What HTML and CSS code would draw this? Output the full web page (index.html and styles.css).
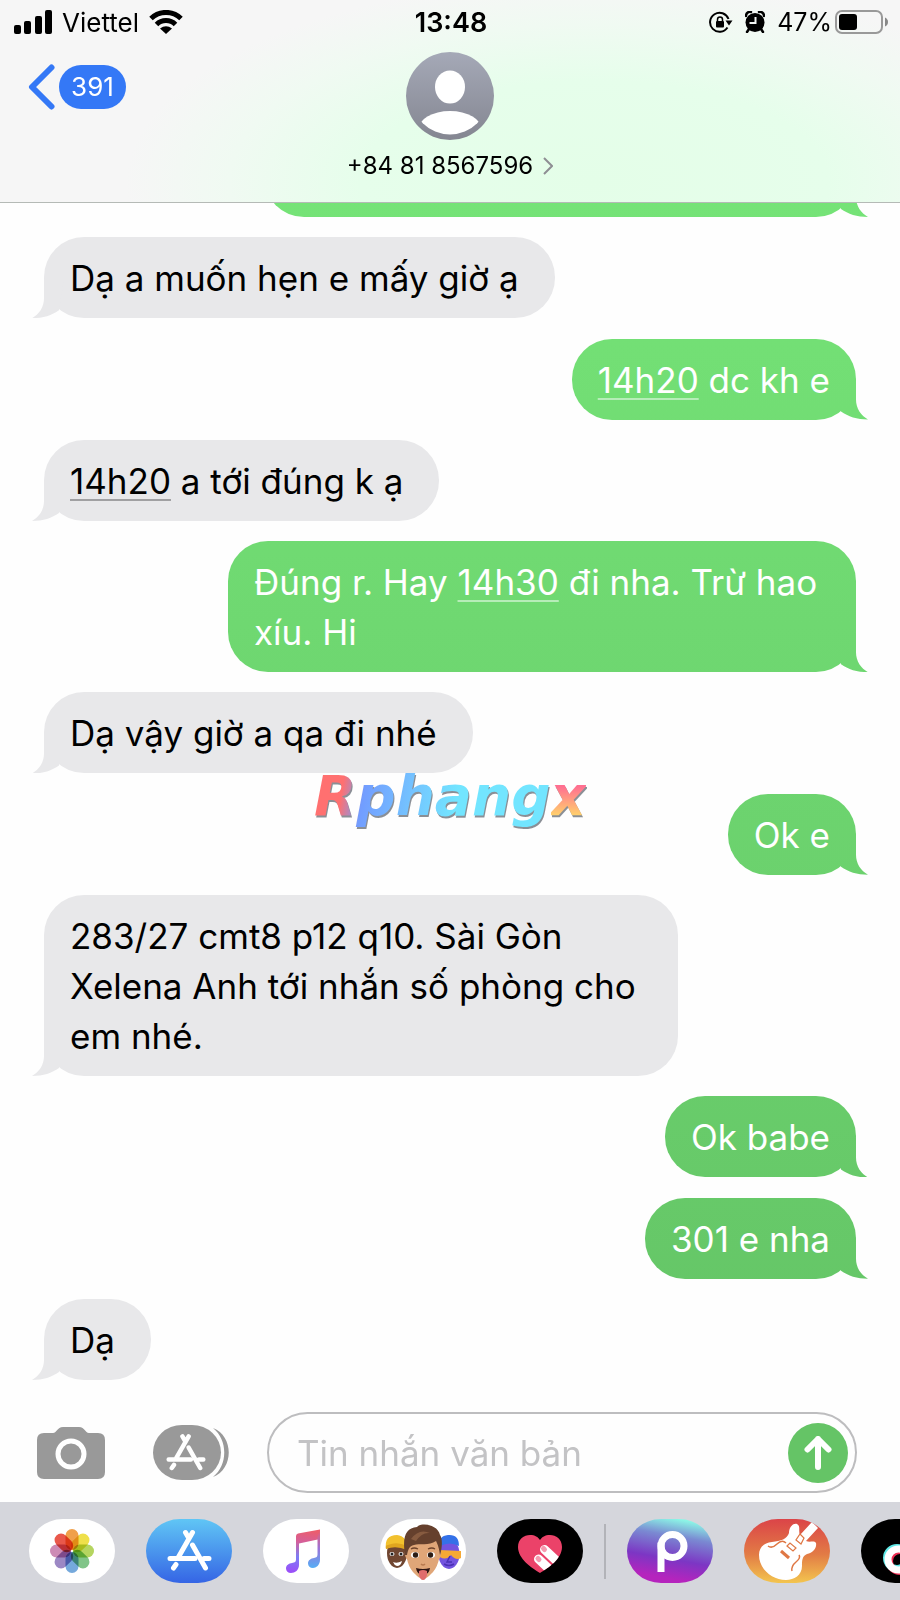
FILE: index.html
```html
<!DOCTYPE html>
<html lang="vi">
<head>
  <meta charset="UTF-8">
  <meta name="viewport" content="width=device-width, initial-scale=1">
  <title>+84 81 8567596</title>
  <link rel="stylesheet" href="styles.css">
</head>
<body>

<svg class="defs" aria-hidden="true">
  <symbol id="store" viewBox="21 10 45 42">
    <g fill="none" stroke="#fff" stroke-width="5" stroke-linecap="round">
      <path d="M46.500 13.500L32.500 38M39.500 13.500L43 19.500M24 39.500H49M58 39.500H63M30 45.500L27.500 49"/>
      <path d="M46.500 26L59.500 49"/>
    </g>
  </symbol>
</svg>

<header>
  <div class="status">
    <div class="status-left">
      <svg width="38" height="24" viewBox="0 0 38 24">
        <rect x="0" y="15" width="7" height="9" rx="2"/>
        <rect x="10" y="11" width="7" height="13" rx="2"/>
        <rect x="21" y="6" width="7" height="18" rx="2"/>
        <rect x="31" y="0" width="7" height="24" rx="2"/>
      </svg>
      <span>Viettel</span>
      <svg width="34" height="24" viewBox="0 0 34 24">
        <g fill="none" stroke="#000" stroke-width="5">
          <path d="M2 8.500A21.500 21.500 0 0 1 32 8.500"/>
          <path d="M7.500 14.500A13.500 13.500 0 0 1 26.500 14.500"/>
        </g>
        <path d="M11 18.500Q17 14 23 18.500L17 24Z"/>
      </svg>
    </div>
    <time>13:48</time>
    <div class="status-right">
      <svg width="24" height="22" viewBox="0 0 24 22">
        <path d="M18.500 16.500A9.500 9.500 0 1 1 19.500 8" fill="none" stroke="#000" stroke-width="2"/>
        <path d="M16.500 9.500H23.500L20 14.500Z"/>
        <rect x="7" y="10" width="8" height="6.500" rx="1"/>
        <path d="M8.500 10V8.500A2.500 2.500 0 0 1 13.500 8.500V10" fill="none" stroke="#000" stroke-width="1.500"/>
      </svg>
      <svg width="20" height="22" viewBox="0 0 20 22">
        <circle cx="10" cy="11.500" r="9.500"/>
        <path d="M1 5A4 4 0 0 1 6 1M14 1A4 4 0 0 1 19 5M4 18L2 21M16 18L18 21" fill="none" stroke="#000" stroke-width="2.500" stroke-linecap="round"/>
        <path d="M10.500 6V12H4.500" fill="none" stroke="#f3f6f4" stroke-width="2"/>
      </svg>
      <span class="percent">47%</span>
      <svg class="battery" width="53" height="24" viewBox="0 0 53 24">
        <rect x="1" y="1" width="46" height="22" rx="6" fill="none" stroke="#999" stroke-width="2"/>
        <rect x="4" y="4" width="18" height="16" rx="3"/>
        <path d="M50 7.500Q53 9 53 12T50 16.500Z" fill="#888"/>
      </svg>
    </div>
  </div>

  <nav>
    <a href="#" class="back" aria-label="Quay lại">
      <svg width="27" height="46" viewBox="0 0 27 46"><path d="M23.500 3.500L4 23L23.500 42.500" fill="none" stroke="#3478f6" stroke-width="6" stroke-linecap="round" stroke-linejoin="round"/></svg>
      <span class="badge">391</span>
    </a>
    <a href="#" class="contact">
      <svg width="88" height="88" viewBox="0 0 88 88">
        <defs>
          <linearGradient id="avatar" x2="0" y2="1"><stop stop-color="#a5a9b7"/><stop offset="1" stop-color="#848691"/></linearGradient>
          <clipPath id="face"><circle cx="44" cy="44" r="38.500"/></clipPath>
        </defs>
        <circle cx="44" cy="44" r="44" fill="url(#avatar)"/>
        <ellipse cx="44" cy="35" rx="15" ry="16.500" fill="#fff"/>
        <ellipse cx="44" cy="78" rx="32" ry="19" fill="#fff" clip-path="url(#face)"/>
      </svg>
      <span class="number">+84 81 8567596
        <svg width="10" height="18" viewBox="0 0 10 18"><path d="M1 1L9 9L1 17" fill="none" stroke="#8e8e93" stroke-width="2"/></svg>
      </span>
    </a>
  </nav>
</header>

<main>
  <div class="bubble me cut"></div>
  <div class="bubble">Dạ a muốn hẹn e mấy giờ ạ</div>
  <div class="bubble me"><a href="#">14h20</a> dc kh e</div>
  <div class="bubble"><a href="#">14h20</a> a tới đúng k ạ</div>
  <div class="bubble me">Đúng r. Hay <a href="#">14h30</a> đi nha. Trừ hao xíu. Hi</div>
  <div class="bubble">Dạ vậy giờ a qa đi nhé</div>
  <div class="bubble me">Ok e</div>
  <div class="bubble">283/27 cmt8 p12 q10. Sài Gòn Xelena Anh tới nhắn số phòng cho em nhé.</div>
  <div class="bubble me">Ok babe</div>
  <div class="bubble me">301 e nha</div>
  <div class="bubble">Dạ</div>
</main>

<div class="watermark"><span class="mark">Rphang</span><span class="mark-x">x</span></div>

<form class="composer">
  <button type="button" class="camera" aria-label="Máy ảnh">
    <svg width="68" height="52" viewBox="0 0 68 52">
      <path d="M7 6H16C20 6 20 0 26 0H42C48 0 48 6 52 6H61Q68 6 68 13V45Q68 52 61 52H7Q0 52 0 45V13Q0 6 7 6Z" fill="#999"/>
      <circle cx="34" cy="27" r="13" fill="none" stroke="#fff" stroke-width="5"/>
    </svg>
  </button>
  <button type="button" class="apps" aria-label="Ứng dụng">
    <svg width="77" height="55" viewBox="0 0 77 55">
      <rect width="68" height="55" rx="29" ry="27.500" fill="#999"/>
      <path d="M60 3C81 11 81 44 60 52C75 40 75 15 60 3Z" fill="#999"/>
      <use href="#store" x="13" y="8" width="40" height="38"/>
    </svg>
  </button>
  <div class="field">
    <input type="text" placeholder="Tin nhắn văn bản" aria-label="Tin nhắn văn bản">
    <button type="submit" class="send" aria-label="Gửi">
      <svg width="28" height="34" viewBox="0 0 28 34"><path d="M14 31V3M3.500 13.500L14 3L24.500 13.500" fill="none" stroke="#fff" stroke-width="6" stroke-linecap="round" stroke-linejoin="round"/></svg>
    </button>
  </div>
</form>

<footer>
  <button class="app" aria-label="Ảnh">
    <svg viewBox="0 0 86 64">
      <g class="petals" transform="translate(43 32)">
        <rect x="-6.500" y="-22" width="13" height="21" rx="6.500" fill="#f0a04b"/>
        <rect x="-6.500" y="-22" width="13" height="21" rx="6.500" fill="#efe04a" transform="rotate(45)"/>
        <rect x="-6.500" y="-22" width="13" height="21" rx="6.500" fill="#b5d560" transform="rotate(90)"/>
        <rect x="-6.500" y="-22" width="13" height="21" rx="6.500" fill="#80c488" transform="rotate(135)"/>
        <rect x="-6.500" y="-22" width="13" height="21" rx="6.500" fill="#75a9dc" transform="rotate(180)"/>
        <rect x="-6.500" y="-22" width="13" height="21" rx="6.500" fill="#9c88c4" transform="rotate(225)"/>
        <rect x="-6.500" y="-22" width="13" height="21" rx="6.500" fill="#cd8bb5" transform="rotate(270)"/>
        <rect x="-6.500" y="-22" width="13" height="21" rx="6.500" fill="#e9584b" transform="rotate(315)"/>
      </g>
    </svg>
  </button>
  <button class="app store" aria-label="App Store">
    <svg viewBox="0 0 86 64"><use href="#store" x="21" y="10" width="45" height="42"/></svg>
  </button>
  <button class="app" aria-label="Nhạc">
    <svg viewBox="0 0 86 64">
      <defs>
        <linearGradient id="note" gradientUnits="userSpaceOnUse" x1="46" y1="11" x2="40" y2="54"><stop stop-color="#ec5d6b"/><stop offset=".3" stop-color="#d45f9a"/><stop offset=".65" stop-color="#7c7df5"/><stop offset="1" stop-color="#9a50f8"/></linearGradient>
        <linearGradient id="note2" x2="0" y2="1"><stop stop-color="#ec5d6b"/><stop offset=".5" stop-color="#9a74da"/><stop offset="1" stop-color="#55aef5"/></linearGradient>
      </defs>
      <path d="M33 17Q33 15 35 14.500L57 10.500V20L36 24.500V46C36 51 32 54 28 54C25 54 23 52 23 49.500C23 46 26 44.500 29 44C32 43.500 33 43 33 40Z" fill="url(#note)"/>
      <path d="M57 10.500V41C57 46 53 49 50 49C47 49 45 47 45 44.500C45 41 48 39.500 51 39C53.500 38.500 54.500 38 54.500 35V18Z" fill="url(#note2)"/>
    </svg>
  </button>
  <button class="app" aria-label="Memoji">
    <svg viewBox="0 0 86 64">
      <ellipse cx="17" cy="34" rx="10" ry="15" fill="#704631"/>
      <path d="M6 30Q4 16 17 16Q27 17 28 30Q16 24 6 30Z" fill="#f2c12e"/>
      <path d="M6 30Q5 26 8 26Q17 22 27 27V31Q16 26 6 30Z" fill="#dfa51f"/>
      <ellipse cx="12" cy="35" rx="2.500" ry="2" fill="#fff"/><circle cx="12" cy="35" r="1.500" fill="#222"/>
      <ellipse cx="21" cy="35" rx="2.500" ry="2" fill="#fff"/><circle cx="21" cy="35" r="1.500" fill="#222"/>
      <path d="M13 43Q17 45 22 42Q21 47 17 47Q14 46 13 43Z" fill="#fff"/>
      <ellipse cx="69" cy="35" rx="10.500" ry="15" fill="#7354df"/>
      <path d="M60 27Q58 17 68 16Q79 15 79 27Q70 22 60 27Z" fill="#3471e8"/>
      <path d="M59 31L81 32V39Q76 42 71 36Q66 42 60 38Z" fill="#f6a935"/>
      <path d="M70 37L67 43H72M64 45Q69 48 74 45" fill="none" stroke="#4a31b5" stroke-width="1.500"/>
      <path d="M27 31Q24 31 25 36T29 41M59 31Q62 31 61 36T57 41" fill="#dba273"/>
      <path d="M26 25Q25 46 35 55Q43 64 51 55Q61 46 60 25Q43 8 26 25Z" fill="#e0a678"/>
      <path d="M25 36C22 17 26 9 37 8C42 3 58 6 60 16C63 20 62 30 60 36C59 29 58 26 56 22C49 27 39 24 34 26C29 27 28 31 27 36Z" fill="#65402d"/>
      <path d="M31 20Q39 9 50 14Q42 13 36 22Z" fill="#875b40"/>
      <ellipse cx="35" cy="36" rx="4" ry="3" fill="#fff"/><ellipse cx="51" cy="36" rx="4" ry="3" fill="#fff"/>
      <circle cx="35.500" cy="36" r="2.700" fill="#2d1c14"/><circle cx="50.500" cy="36" r="2.700" fill="#2d1c14"/>
      <path d="M31 30Q34 28 38 30M48 30Q52 28 55 30" fill="none" stroke="#6e432b" stroke-width="1.300"/>
      <path d="M41 45Q43 47 45 45" fill="none" stroke="#b87a50" stroke-width="1.500"/>
      <path d="M36 49Q43 51 50 49Q49 56 43 56Q37 56 36 49Z" fill="#2e1513"/>
      <path d="M39 52Q43 50 47 52V56Q46 61 43 61T39 56Z" fill="#e06c6c"/>
    </svg>
  </button>
  <button class="app black" aria-label="Digital Touch">
    <svg viewBox="0 0 86 64">
      <clipPath id="heart"><path d="M43 54C35 49 21 40 21 28C21 20 27 16 33 16C38 16 41 18 43 21C45 18 48 16 53 16C59 16 65 20 65 28C65 40 51 49 43 54Z"/></clipPath>
      <g clip-path="url(#heart)">
        <path d="M20 14H66V56H20Z" fill="#eb4269"/>
        <path d="M47.500 30.500L66 48M41.500 40L58 55.500" stroke="#fff" stroke-width="9" stroke-linecap="round"/>
        <path d="M46.500 29.500L47.500 30.500M41 39.500L42 40.500" stroke="#f59bb0" stroke-width="5" stroke-linecap="round"/>
      </g>
    </svg>
  </button>
  <span class="divider"></span>
  <button class="app picsart" aria-label="Picsart">
    <svg viewBox="0 0 86 64">
      <circle cx="45.500" cy="27" r="11.500" fill="none" stroke="#fff" stroke-width="7"/>
      <path d="M34 27V49.500" stroke="#fff" stroke-width="7" stroke-linecap="square"/>
    </svg>
  </button>
  <button class="app garage" aria-label="GarageBand">
    <svg viewBox="0 0 86 64">
      <path d="M15 36C15 28 20 24 28 23C37 22 43 20 45 14C45 8 49 4 53 5C57 7 54 12 56 16L68 3L74 9L62 22C66 24 70 21 72 24C73 29 69 34 63 35C58 37 58 42 58 47C58 56 50 61 42 61C28 61 15 50 15 36Z" fill="#fff"/>
      <g fill="none" stroke="#df7744" stroke-width="1.200">
        <path d="M52 21L57 25L60 19L56 15ZM43 27L49 32L52 29L46 24Z"/>
        <path d="M24 27Q28 30 33 25T42 24M48 52Q47 47 52 43T55 36" stroke-width="1.500"/>
        <path d="M37 32L45 39" stroke-width="3"/>
      </g>
    </svg>
  </button>
  <button class="app black" aria-label="TikTok">
    <svg viewBox="0 0 86 64">
      <g fill="none" stroke-width="7">
        <circle cx="36" cy="39" r="10.500" stroke="#5fe8e6"/>
        <circle cx="39" cy="42" r="10.500" stroke="#ef3055"/>
        <circle cx="37.500" cy="40.500" r="10.500" stroke="#fff"/>
      </g>
    </svg>
  </button>
</footer>

</body>
</html>
```

FILE: styles.css
```css
* { margin: 0; padding: 0; box-sizing: border-box; }

body {
  font-family: Inter, "Noto Sans", sans-serif;
  background: #fefefe;
  color: #000;
  min-height: 100vh;
  display: flex;
  flex-direction: column;
  position: relative;
  overflow-x: hidden;
}

a { color: inherit; text-decoration: none; }
button { border: none; background: none; cursor: pointer; }
svg { display: block; flex: none; }
.defs { position: absolute; width: 0; height: 0; }

/* header */
header {
  height: 203px;
  border-bottom: 1px solid #b5bab6;
  background: radial-gradient(ellipse 52% 100% at 66% 90%, #e4fee8 0%, #e6feeb 50%, #f0faf2 78%, #f6f6f6 100%);
  z-index: 1;
}

.status {
  height: 44px;
  padding: 0 12px 0 14px;
  display: grid;
  grid-template-columns: 1fr auto 1fr;
  align-items: center;
  font-size: 26px;
}
.status time { font-size: 27px; font-weight: 600; }
.status-left, .status-right { display: flex; align-items: center; gap: 10px; }
.status-right { justify-content: flex-end; gap: 12px; }
.percent { font-size: 25px; }
.battery { margin-left: -9px; }

nav {
  display: grid;
  grid-template-columns: 1fr auto 1fr;
  align-items: start;
  padding: 8px 28px 0;
}
.back { display: flex; align-items: center; gap: 4px; padding-top: 12px; }
.badge {
  background: #3478f6;
  color: #fff;
  font-size: 26px;
  line-height: 44px;
  width: 67px;
  text-align: center;
  border-radius: 22px;
}
.contact { display: flex; flex-direction: column; align-items: center; gap: 10px; }
.number {
  display: flex;
  align-items: center;
  gap: 10px;
  font-size: 24px;
  line-height: 32px;
}

/* messages */
main {
  flex: 1;
  display: flex;
  flex-direction: column;
  align-items: flex-start;
  justify-content: space-between;
  gap: 20px;
  padding: 0 44px;
}

.bubble {
  position: relative;
  max-width: 634px;
  padding: 16px 36px 15px 26px;
  border-radius: 40px;
  background: #e8e8ea;
  font-size: 35px;
  line-height: 50px;
}
.bubble a {
  text-decoration: underline;
  text-decoration-color: #a0a0a2;
  text-decoration-thickness: 2px;
  text-underline-offset: 5px;
  text-decoration-skip-ink: none;
}
.bubble::after {
  content: "";
  position: absolute;
  left: -12px;
  bottom: 0;
  width: 40px;
  height: 40px;
  background: inherit;
  clip-path: path("M32 0H12V20C12 29 7 36 0 40C11 40 20 37 27 32Z");
}

.me {
  align-self: flex-end;
  max-width: 628px;
  padding: 16px 26px 15px;
  color: #fff;
  /* one gradient runs down the whole thread */
  background: linear-gradient(#75e377 200px, #64c466 1400px) fixed;
}
.me a { text-decoration-color: #b6edb8; }
.me::after {
  left: auto;
  right: -12px;
  clip-path: path("M8 0H28V20C28 29 33 36 40 40C29 40 20 37 13 32Z");
}
.cut { width: 592px; height: 80px; margin-top: -66px; }

.watermark {
  position: absolute;
  left: 0;
  right: 0;
  top: 50%;
  transform: translateY(-50%);
  padding-bottom: 8px;
  text-align: center;
  font: italic bold 55px/64px "DejaVu Sans", sans-serif;
  filter: drop-shadow(1px 2px 0 #8a8f96);
  pointer-events: none;
}
.mark, .mark-x {
  -webkit-background-clip: text;
  background-clip: text;
  color: transparent;
}
.mark { background-image: linear-gradient(100deg, #ff7070 13%, #729dff 22%, #74c4ff 42%, #72e5ff 60%); }
.mark-x { background-image: linear-gradient(#ff6f91 35%, #ffd06c 80%); }

/* message box */
.composer {
  display: flex;
  align-items: center;
  padding: 32px 43px 9px 37px;
}
.apps { margin: 0 37px 0 48px; }
.field {
  flex: 1;
  min-width: 0;
  display: flex;
  align-items: center;
  height: 81px;
  padding: 0 7px 0 28px;
  border: 2px solid #bdbdbf;
  border-radius: 41px;
}
.field input {
  flex: 1;
  min-width: 0;
  border: none;
  outline: none;
  background: none;
  font: 35px/50px Inter, "Noto Sans", sans-serif;
}
.field input::placeholder { color: #c3c3c5; }
.send {
  width: 60px;
  height: 60px;
  border-radius: 50%;
  background: #65c466;
  display: flex;
  align-items: center;
  justify-content: center;
}

/* app strip */
footer {
  display: flex;
  align-items: center;
  gap: 31px;
  height: 98px;
  padding-left: 29px;
  background: #d5d6dc;
  overflow: hidden;
}
.app {
  flex: none;
  width: 86px;
  height: 64px;
  border-radius: 34px / 32px;
  background: #fff;
  overflow: hidden;
}
.petals rect { mix-blend-mode: multiply; }
.store { background: linear-gradient(#60c6f5, #3565e5); }
.black { background: #000; }
.picsart { background: linear-gradient(190deg, #8cf5e6 8%, #7a8ad2 30%, #7c36c4 60%, #b524bd 85%); }
.garage { background: linear-gradient(#db4448, #e27b45 55%, #f3c54f); }
.divider {
  flex: none;
  width: 2px;
  height: 55px;
  margin: 0 -10px;
  background: #b2b3b8;
}
```
